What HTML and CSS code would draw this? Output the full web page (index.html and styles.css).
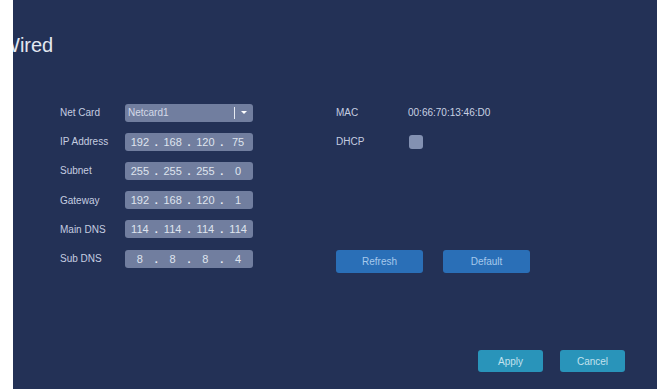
FILE: index.html
```html
<!DOCTYPE html>
<html lang="en">
<head>
    <meta charset="UTF-8">
    <meta name="viewport" content="width=device-width, initial-scale=1.0">
    <title>Wired</title>
    <link rel="stylesheet" href="styles.css">
</head>
<body>
    <div class="panel">
        <h1 class="title">Wired</h1>

        <div class="form">
            <div class="col-left">
                <div class="row">
                    <label>Net Card</label>
                    <div class="select">
                        <span class="select-text">Netcard1</span>
                        <span class="select-sep"></span>
                        <span class="select-arrow"></span>
                    </div>
                </div>
                <div class="row">
                    <label>IP Address</label>
                    <div class="ip">
                        <span>192</span><i>.</i><span>168</span><i>.</i><span>120</span><i>.</i><span>75</span>
                    </div>
                </div>
                <div class="row">
                    <label>Subnet</label>
                    <div class="ip">
                        <span>255</span><i>.</i><span>255</span><i>.</i><span>255</span><i>.</i><span>0</span>
                    </div>
                </div>
                <div class="row">
                    <label>Gateway</label>
                    <div class="ip">
                        <span>192</span><i>.</i><span>168</span><i>.</i><span>120</span><i>.</i><span>1</span>
                    </div>
                </div>
                <div class="row">
                    <label>Main DNS</label>
                    <div class="ip">
                        <span>114</span><i>.</i><span>114</span><i>.</i><span>114</span><i>.</i><span>114</span>
                    </div>
                </div>
                <div class="row">
                    <label>Sub DNS</label>
                    <div class="ip">
                        <span>8</span><i>.</i><span>8</span><i>.</i><span>8</span><i>.</i><span>4</span>
                    </div>
                </div>
            </div>

            <div class="col-right">
                <div class="row">
                    <label>MAC</label>
                    <span class="value">00:66:70:13:46:D0</span>
                </div>
                <div class="row">
                    <label>DHCP</label>
                    <span class="checkbox"></span>
                </div>
                <div class="row"></div>
                <div class="row"></div>
                <div class="row"></div>
                <div class="row buttons">
                    <button class="btn btn-blue">Refresh</button>
                    <button class="btn btn-blue">Default</button>
                </div>
            </div>
        </div>

        <div class="footer">
            <button class="btn btn-teal">Apply</button>
            <button class="btn btn-teal">Cancel</button>
        </div>
    </div>
</body>
</html>
```

FILE: styles.css
```css
body {
    margin: 0;
    background-color: #fff;
    font-family: "Liberation Sans", Arial, sans-serif;
}
.panel {
    margin-left: 13px;
    width: 644px;
    height: 389px;
    background-color: #233156;
    overflow: hidden;
    box-sizing: border-box;
    padding-top: 33px;
}
.title {
    margin: 0 0 41px -12px;
    font-size: 20px;
    line-height: 24px;
    font-weight: normal;
    color: #e3e8f1;
}
.form {
    display: flex;
    padding-left: 47px;
    gap: 83px;
    height: 176px;
}
.row {
    display: flex;
    align-items: center;
    height: 29.2px;
}
.row label {
    font-size: 10px;
    color: #c5cde0;
}
.col-left .row label {
    width: 65px;
}
.col-right .row label {
    width: 72px;
}
.select,
.ip {
    width: 128px;
    height: 18px;
    border-radius: 3px;
    background-color: #717e9f;
    display: flex;
    align-items: center;
    font-size: 11px;
    color: #dfe4ee;
}
.select-text {
    flex: 1;
    padding-left: 3px;
    font-size: 10px;
    color: #d4dae8;
}
.select-sep {
    width: 1px;
    height: 12px;
    background-color: #e6eaf2;
}
.select-arrow {
    width: 0;
    height: 0;
    margin: 0 6px 0 6px;
    border-left: 3px solid transparent;
    border-right: 3px solid transparent;
    border-top: 3px solid #fff;
}
.ip span {
    flex: 1;
    text-align: center;
}
.ip i {
    font-style: normal;
    width: 3px;
    font-weight: bold;
    color: #e8ecf4;
}
.value {
    font-size: 10px;
    color: #c9d1e3;
}
.checkbox {
    width: 14px;
    height: 14px;
    border-radius: 3px;
    background-color: #8391b2;
    margin-left: 1px;
}
.buttons {
    gap: 20px;
    padding-top: 3px;
}
.btn {
    border: none;
    height: 22px;
    border-radius: 3px;
    font-family: "Liberation Sans", Arial, sans-serif;
    font-size: 10px;
    padding: 0;
    cursor: pointer;
}
.btn-blue {
    width: 87px;
    height: 23px;
    background-color: #2a6fb7;
    color: #a6c9ec;
}
.btn-teal {
    width: 65px;
    background-color: #2994ba;
    color: #c2e2ee;
}
.footer {
    display: flex;
    justify-content: flex-end;
    gap: 17px;
    padding-right: 32px;
    margin-top: 76px;
}
```
